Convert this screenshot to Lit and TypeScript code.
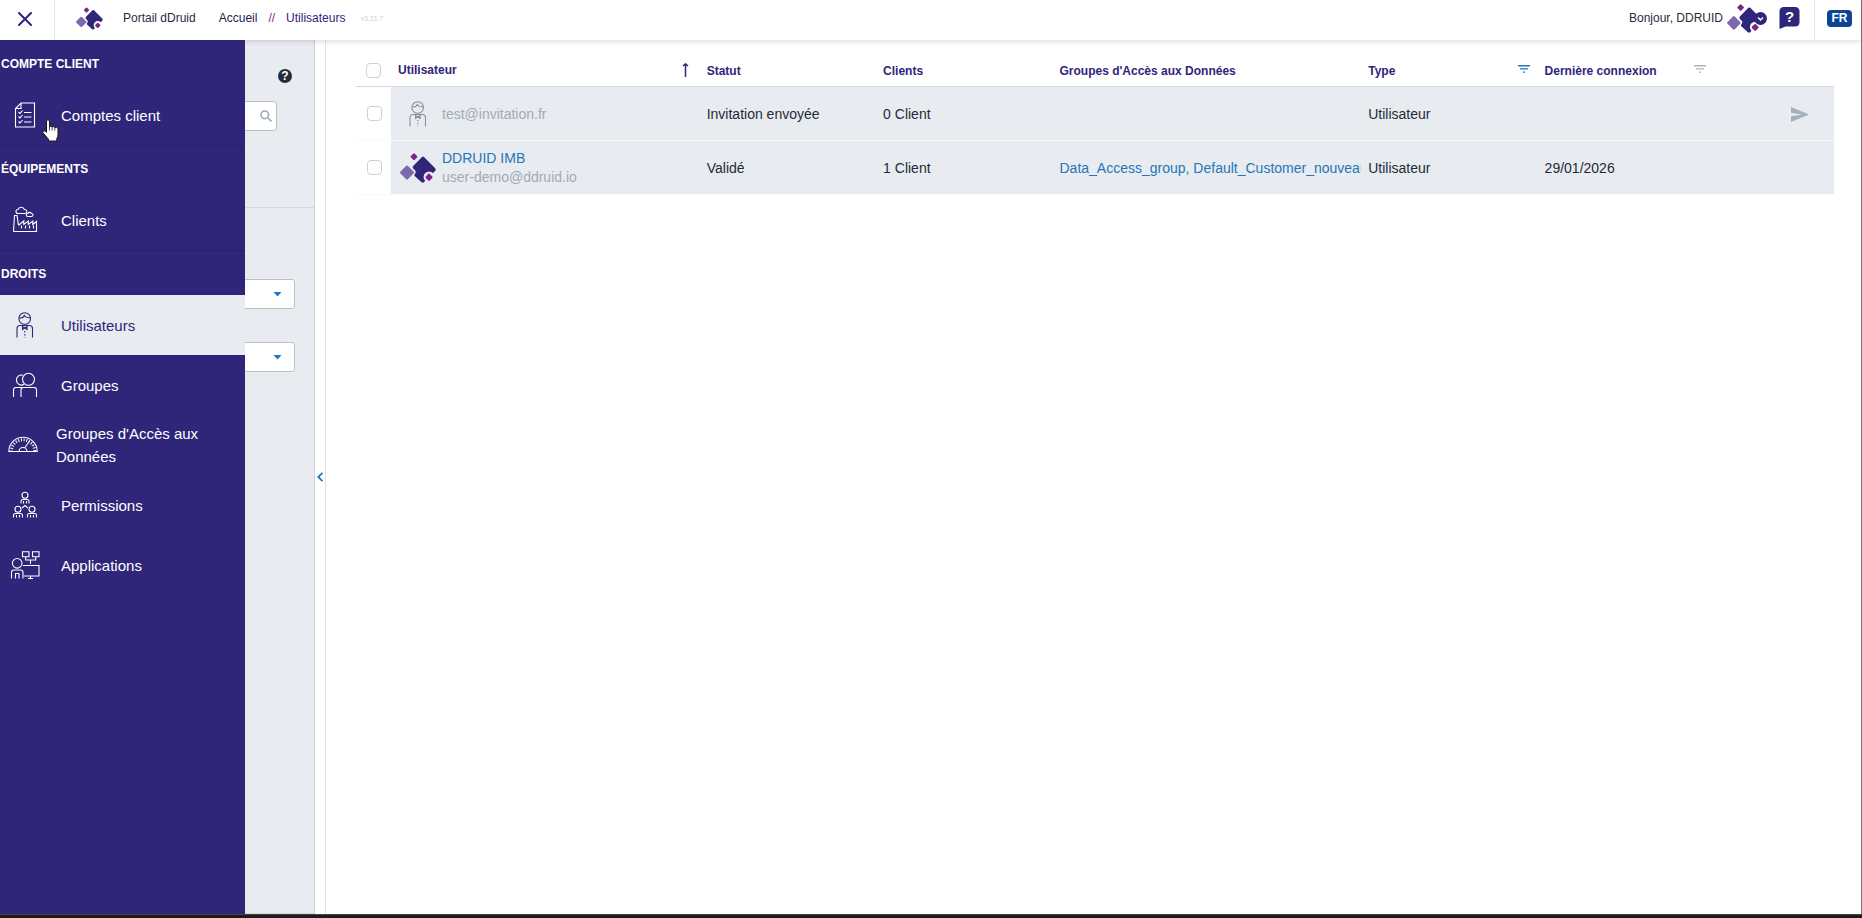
import { LitElement, html, svg, css } from "lit";
import { customElement } from "lit/decorators.js";

const icons: Record<string, unknown> = {
  accounts: svg`<path d="M11 3h13.500v24h-19V8.500z M11 3v5.500H5.500"/><path d="M14 12.500h7.500M14 17h7.500M14 22h7.500M8.500 12l1.500 1.500 2.500-3M8.500 16.500l1.500 1.500 2.500-3M8.500 21.500l1.500 1.500 2.500-3"/>`,
  factory: svg`<path d="M3.500 26.500 4.500 10.500h2.500l1.500 9.500M7.800 17.500l1 2.500 5-4v3.500l4.500-3.500v3.500l4.500-3.500v3.500l3.700-3v10h-23"/><path d="M11.500 20.500v3M15.500 20.500v3M19.500 20.500v3M23.500 20.500v3"/><path d="M8 8.500a2 2 0 0 1 0-4 3.400 3.400 0 0 1 6.400 0 2 2 0 0 1 .6 4zM17.800 11.500a1.500 1.500 0 0 1 0-3 2 2 0 0 1 3.600 0 1.500 1.500 0 0 1 .2 3z"/>`,
  user: svg`<circle cx="14.700" cy="8.500" r="5.800"/><path d="M9.300 8c2.500.3 4.200-.8 5-2.500 1.200 2 3.500 2.500 6.300 2"/><path d="M7 27.500v-9q0-3 3-3h9.500q3 0 3 3v9"/><path d="M12.500 16.500v3l2.300-1.500 2.300 1.500v-3L14.800 18z"/><path d="M14.800 21v6.500" stroke-dasharray="1.500 1.500"/>`,
  groups: svg`<circle cx="18.500" cy="9.300" r="6"/><path d="M13 5.300a5 5 0 1 0 1 9"/><path d="M11 27v-7q0-2.500 2.500-2.500h10.500q2.500 0 2.500 2.500v7M3.500 27v-7q0-2.500 2.500-2.500h6"/>`,
  gauge: svg`<path d="M.8 21.500a14 14 0 0 1 28.400 0zM11 21.500a4 4 0 0 1 8 0M17 17.500l4.500-6.500"/><path d="M3.300 21.500a11.700 11.700 0 0 1 23.400 0" stroke-width="3" stroke-dasharray="1 1.700"/>`,
  permissions: svg`<circle cx="15" cy="5.300" r="3"/><path d="M11 13.500v-2q0-2 2-2h4q2 0 2 2v2M13.500 11v2.500M16.500 11v2.500"/><circle cx="8" cy="19.300" r="3"/><circle cx="22" cy="19.300" r="3"/><path d="M3.500 27.500v-2q0-2 2-2h5q2 0 2 2v2M6.500 25v2.500M9.500 25v2.500M17.500 27.500v-2q0-2 2-2h5q2 0 2 2v2M20.500 25v2.500M23.500 25v2.500M12 18l3-2.500 3 2.500"/>`,
  applications: svg`<circle cx="7.200" cy="13.300" r="4.800"/><path d="M1.500 28.500v-6q0-2.500 2.500-2.500h6.500q2.500 0 2.500 2.500v6M5.500 28.500v-5h3.500v5"/><path d="M12.500 1.700h6.500v5h-6.500zM22.500 1.700h6.500v5h-6.500zM15.700 6.700v3.300h10V6.700M20.500 10v4"/><path d="M13 15.500h16v10.500H14M18 28.500h5M20.500 26v2"/>`,
};

const icon = (name: string) =>
  html`<svg class="icon" width="30" height="30" viewBox="0 0 30 30" fill="none" stroke="currentColor" stroke-width="1.100" aria-hidden="true">${icons[name]}</svg>`;

const logo = (width: number, height: number) => html`
  <svg width=${width} height=${height} viewBox="0 0 36 30" aria-hidden="true">
    <path fill="#7b68ad" d="M6 13q1-1 2 0l5.500 5.500q1 1 0 2L8 26q-1 1-2 0L.500 20.500q-1-1 0-2z" />
    <path fill="#7a2583" d="M13.200.700q.8-.8 1.600 0l2.200 2.200q.8.800 0 1.600l-2.200 2.200q-.8.800-1.600 0L11 4.500q-.8-.800 0-1.600z" />
    <path fill="#2f2579" d="M22 4q1-1 2 0L35.200 15.200q.9 1.200.1 2.500L33 20A5.500 5.500 0 0 0 25.200 27.800L23.900 29.200q-1.200.9-2.400 0L14.700 23q-.8-1.100.3-2.200 1.500-1.800 0-3.600L13.200 15.400q-1-1.400.2-2.700z" />
    <path fill="#7a2583" d="M28.200 21q.8-.800 1.600 0l2.400 2.400q.8.800 0 1.600l-2.400 2.400q-.8.800-1.600 0L25.800 25q-.8-.800 0-1.600z" />
  </svg>`;

const filterIcon = html`
  <svg width="12" height="8" viewBox="0 0 12 8" fill="currentColor" aria-hidden="true">
    <path d="M0 0h12v1.400H0zM2 3.200h8v1.400H2zM5 6.400h2v1.400H5z" />
  </svg>`;

type MenuItem = { icon: string; label: string; active?: boolean; wide?: boolean };

const sections: { title: string; items: MenuItem[] }[] = [
  { title: "COMPTE CLIENT", items: [{ icon: "accounts", label: "Comptes client" }] },
  { title: "ÉQUIPEMENTS", items: [{ icon: "factory", label: "Clients" }] },
  {
    title: "DROITS",
    items: [
      { icon: "user", label: "Utilisateurs", active: true },
      { icon: "groups", label: "Groupes" },
      { icon: "gauge", label: "Groupes d'Accès aux Données", wide: true },
      { icon: "permissions", label: "Permissions" },
      { icon: "applications", label: "Applications" },
    ],
  },
];

const users = [
  { name: "", email: "test@invitation.fr", status: "Invitation envoyée", clients: "0 Client", groups: [] as string[], type: "Utilisateur", last: "", pending: true },
  { name: "DDRUID IMB", email: "user-demo@ddruid.io", status: "Validé", clients: "1 Client", groups: ["Data_Access_group", "Default_Customer_nouveau"], type: "Utilisateur", last: "29/01/2026", pending: false },
];

const base = css`
  * { box-sizing: border-box; }
  button { padding: 0; border: 0; background: none; font: inherit; color: inherit; cursor: pointer; }
  a { color: inherit; text-decoration: none; }
  svg { display: block; flex: none; }
`;

@customElement("top-bar")
export class TopBar extends LitElement {
  static styles = [base, css`
    :host { display: block; position: relative; z-index: 1; background: #fff; box-shadow: 0 1px 6px rgba(0, 0, 0, 0.16); }
    .bar { display: flex; height: 40px; font-size: 12px; color: #2b2b3d; }
    .close { display: flex; align-items: center; justify-content: center; width: 55px; border-right: 1px solid #e6e6ea; padding: 0 5px 3px 0; color: #2f2579; }
    .brand, .crumbs, .user, .lang { display: flex; align-items: center; padding-bottom: 4px; }
    .brand { gap: 20px; padding-left: 21px; }
    .crumbs { gap: 11px; padding-left: 23px; color: #211b4e; }
    .sep { color: #8a1c7c; }
    .here { color: #2f2579; }
    .version { font-size: 7px; padding-left: 4px; color: #cfcfcf; }
    .user { margin-left: auto; }
    .menu { display: flex; align-items: center; gap: 4px; }
    .avatar { position: relative; width: 40px; }
    .chev { position: absolute; right: 0; top: 8px; }
    .help { position: relative; margin-left: 12px; width: 21px; height: 22px; color: #fff; }
    .mark { position: absolute; inset: 0 0 2px; font-size: 15px; font-weight: 700; line-height: 20px; text-align: center; }
    .lang { margin-left: 14px; padding-left: 12px; padding-right: 9px; padding-bottom: 3px; border-left: 1px solid #e6e6ea; }
    .badge { width: 25px; height: 17px; border-radius: 4px; background: #0c4494; color: #fff; font-size: 12px; font-weight: 700; line-height: 17px; text-align: center; }
  `];
  render() {
    return html`
      <header class="bar">
        <button class="close" aria-label="Fermer">
          <svg width="14" height="14" viewBox="0 0 14 14" stroke="currentColor" stroke-width="2" stroke-linecap="round"><path d="M1 1l12 12M13 1 1 13" /></svg>
        </button>
        <div class="brand">${logo(27, 23)}<span>Portail dDruid</span></div>
        <nav class="crumbs">
          <a href="#">Accueil</a><span class="sep">//</span><a class="here" href="#">Utilisateurs</a>
          <span class="version">v3.21.7</span>
        </nav>
        <div class="user">
          <button class="menu">
            <span>Bonjour, DDRUID</span>
            <span class="avatar">${logo(35, 29)}
              <svg class="chev" width="13" height="13" viewBox="0 0 13 13"><circle cx="6.500" cy="6.500" r="6.500" fill="#2f2579" /><path d="M4 5.500 6.500 8 9 5.500" fill="none" stroke="#fff" stroke-width="1.500" /></svg>
            </span>
          </button>
          <button class="help">
            <svg width="21" height="22" viewBox="0 0 21 22" fill="#2f2579"><path d="M5 0h11q4.500 0 4.500 4.500V15q0 4.500-4.500 4.500H6.500L.500 22V4.500Q.500 0 5 0z" /></svg>
            <span class="mark">?</span>
          </button>
        </div>
        <div class="lang"><button class="badge">FR</button></div>
      </header>`;
  }
}

@customElement("side-menu")
export class SideMenu extends LitElement {
  static styles = [base, css`
    :host { display: block; background: #2f2579; color: #fff; }
    .title { margin: 0; height: 45px; padding: 2px 1px 0; font-size: 12px; font-weight: 700; line-height: 42px; border-top: 1px solid #281f68; }
    .section:first-child .title { border-top-color: transparent; }
    .list { margin: 0; padding: 0; list-style: none; }
    .item { display: flex; align-items: center; gap: 11px; height: 60px; padding-right: 32px; font-size: 15px; line-height: 23px; }
    .slot { display: flex; justify-content: center; width: 50px; flex: none; }
    .wide .slot { width: 45px; }
    .active { background: #e8ebf0; color: #2f2579; }
  `];
  render() {
    return html`<nav>
      ${sections.map((s) => html`
        <section class="section">
          <h2 class="title">${s.title}</h2>
          <ul class="list">
            ${s.items.map((i) => html`<li>
              <a href="#" class="item ${i.active ? "active" : ""} ${i.wide ? "wide" : ""}">
                <span class="slot">${icon(i.icon)}</span><span>${i.label}</span>
              </a>
            </li>`)}
          </ul>
        </section>`)}
    </nav>`;
  }
}

@customElement("filter-panel")
export class FilterPanel extends LitElement {
  static styles = [base, css`
    :host { display: flex; }
    .panel { width: 315px; background: #e8ebf0; border-right: 1px solid #cfd3d8; border-bottom: 1px solid #cfd3d8; }
    .top { display: flex; flex-direction: column; gap: 18px; height: 168px; padding: 29px 22px 0 20px; border-bottom: 1px solid #d3d7dc; }
    .info { display: flex; align-items: center; justify-content: center; align-self: flex-end; width: 14px; height: 14px; border-radius: 50%; background: #222e3e; color: #fff; font-size: 12px; font-weight: 700; line-height: 14px; }
    .search { display: flex; align-items: center; height: 30px; margin-right: 15px; padding-right: 4px; border: 1px solid #bfbfbf; border-radius: 3px; background: #fff; color: #9fabb6; }
    .input { flex: 1; min-width: 0; border: 0; outline: 0; background: none; font: inherit; }
    .fields { display: grid; gap: 33px; padding: 71px 19px 0 20px; }
    .select { position: relative; color: #2377bd; }
    .box { display: block; width: 100%; height: 30px; border: 1px solid #bfbfbf; border-radius: 3px; background: #fff; appearance: none; }
    .arrow { position: absolute; right: 13px; top: 13px; pointer-events: none; }
    .gutter { display: flex; align-items: center; width: 11px; border-right: 1px solid #e4e4e4; padding-left: 2px; color: #2377bd; }
  `];
  render() {
    const select = (label: string) => html`
      <div class="select">
        <select class="box" aria-label=${label}></select>
        <svg class="arrow" width="9" height="5" viewBox="0 0 9 5" fill="currentColor"><path d="M.500 0h8l-4 4.500z" /></svg>
      </div>`;
    return html`
      <aside class="panel">
        <div class="top">
          <button class="info">?</button>
          <div class="search">
            <input class="input" type="search" aria-label="Rechercher" />
            <svg width="12" height="12" viewBox="0 0 12 12" fill="none" stroke="currentColor" stroke-width="1.600"><circle cx="4.800" cy="4.800" r="3.800" /><path d="M7.700 7.700 11.500 11.500" /></svg>
          </div>
        </div>
        <div class="fields">${select("Statut")}${select("Type")}</div>
      </aside>
      <button class="gutter" aria-label="Réduire">
        <svg width="6" height="10" viewBox="0 0 6 10" fill="none" stroke="currentColor" stroke-width="1.800"><path d="M5.500.800 1.300 5l4.200 4.200" /></svg>
      </button>`;
  }
}

@customElement("user-table")
export class UserTable extends LitElement {
  static styles = [base, css`
    :host { display: block; padding: 15px 27px 0 30px; }
    .table, .head, .body { display: block; }
    .row { display: grid; grid-template-columns: 35px minmax(0, 7fr) repeat(2, minmax(0, 4fr)) minmax(0, 7fr) repeat(2, minmax(0, 4fr)) 120px; }
    .head { border-bottom: 1px solid #d5d8dc; color: #2f2579; font-size: 12px; }
    .head .row { height: 31px; }
    .th { display: flex; align-items: center; justify-content: space-between; padding: 0 8px 0 7px; font-weight: 700; text-align: left; white-space: nowrap; }
    .check { display: flex; align-items: center; justify-content: center; padding: 0; background: #fff; }
    .box { appearance: none; width: 15px; height: 15px; margin: 0; border: 1px solid #cfcfd2; border-radius: 4px; background: #fff; }
    .sort { padding-right: 11px; padding-bottom: 2px; }
    .filter { padding-bottom: 4px; }
    .on { color: #2377bd; }
    .off { color: #a9b2bb; }
    .body .row { height: 54px; border-bottom: 1px solid #f7f8f9; font-size: 14px; line-height: 19px; color: #232b38; }
    .td { display: flex; align-items: center; padding: 1px 0 0 7px; overflow: hidden; white-space: nowrap; background: #e8ebf0; }
    .body .check { padding: 0 0 0 1px; background: #fff; }
    .who { gap: 6px; padding-left: 9px; color: #a0abb5; }
    .pic { display: flex; justify-content: center; width: 36px; flex: none; color: #8b9199; }
    .link { color: #2477b8; }
    .name { display: block; }
    .action { justify-content: flex-end; padding-right: 25px; color: #a5b0bb; }
  `];
  render() {
    return html`
      <table class="table">
        <thead class="head">
          <tr class="row">
            <th class="check"><input class="box" type="checkbox" aria-label="Tout sélectionner" /></th>
            <th class="th sort">Utilisateur
              <svg width="7" height="14" viewBox="0 0 7 14" fill="none" stroke="currentColor" stroke-width="1.500"><path d="M3.500 14V1M1 3 3.500.900 6 3" /></svg>
            </th>
            <th class="th">Statut</th>
            <th class="th">Clients</th>
            <th class="th">Groupes d'Accès aux Données</th>
            <th class="th">Type<span class="filter on">${filterIcon}</span></th>
            <th class="th">Dernière connexion<span class="filter off">${filterIcon}</span></th>
            <th></th>
          </tr>
        </thead>
        <tbody class="body">
          ${users.map((u) => html`
            <tr class="row">
              <td class="check"><input class="box" type="checkbox" aria-label=${u.email} /></td>
              <td class="td who">
                <span class="pic">${u.pending ? icon("user") : logo(36, 30)}</span>
                <span>${u.name ? html`<a class="link name" href="#">${u.name}</a>` : ""}${u.email}</span>
              </td>
              <td class="td">${u.status}</td>
              <td class="td">${u.clients}</td>
              <td class="td link"><span>${u.groups.map((g, i) => html`${i ? ", " : ""}<a href="#">${g}</a>`)}</span></td>
              <td class="td">${u.type}</td>
              <td class="td">${u.last}</td>
              <td class="td action">${u.pending ? html`
                <button aria-label="Renvoyer"><svg width="18" height="15" viewBox="0 0 18 15" fill="currentColor"><path d="M0 0l18 7.500L0 15V9.300l11-1.800L0 5.700z" /></svg></button>` : ""}
              </td>
            </tr>`)}
        </tbody>
      </table>`;
  }
}

@customElement("app-root")
export class AppRoot extends LitElement {
  static styles = [base, css`
    :host { display: flex; flex-direction: column; min-height: 100vh; background: #fff; font-family: "Liberation Sans", Arial, sans-serif; }
    .page { display: flex; flex-direction: column; flex: 1; border-right: 1px solid #77777a; }
    .content { position: relative; display: flex; flex: 1; }
    .menu { position: absolute; left: 0; top: 0; bottom: 0; width: 245px; z-index: 2; }
    .main { flex: 1; min-width: 0; }
    .edge { height: 4px; background: #1b1b1b; border-top: 1px solid #454547; }
    .pointer { position: absolute; left: 42px; top: 79px; z-index: 3; }
  `];
  render() {
    return html`
      <div class="page">
        <top-bar></top-bar>
        <div class="content">
          <side-menu class="menu"></side-menu>
          <filter-panel></filter-panel>
          <user-table class="main"></user-table>
          <svg class="pointer" width="17" height="23" viewBox="0 0 17 23" fill="#fff" stroke="#1a1a1a" stroke-width="1"><path d="M4.500 1.800q1.500-2 3 0v5.700q1.500-1 2.600.4 1.600-.9 2.700.6 2.200-.8 3.200 1.200v6q0 2-1.200 3.800v2.500H6.500v-1.800L1 13.800q-.8-1.800 1-2 1.300 0 2.500 1.500z" /><path d="M7.500 7.500v4M10.100 8v3.500M12.800 8.700v3" stroke-width=".8" /></svg>
        </div>
      </div>
      <div class="edge"></div>`;
  }
}
